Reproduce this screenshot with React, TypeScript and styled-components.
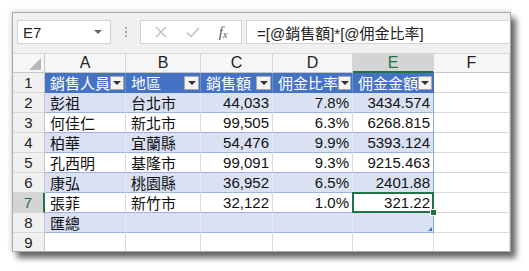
import styled, { createGlobalStyle } from "styled-components";

const GlobalStyle = createGlobalStyle`
  html, body {
    margin: 0;
    padding: 0;
    background: #ffffff;
  }
  body {
    font-family: "Liberation Sans", "Noto Sans CJK TC", sans-serif;
  }
`;

const Page = styled.div`
  padding: 12px 0 0 12px;
  width: 529px;
  height: 271px;
  box-sizing: border-box;
`;

const Window = styled.div`
  width: 499px;
  height: 240px;
  box-sizing: border-box;
  border: 1px solid #a9a9a9;
  background: #f0f0f0;
  overflow: hidden;
  box-shadow: 5px 6px 6px rgba(0, 0, 0, 0.6), -1px -1px 5px rgba(0, 0, 0, 0.15);
  display: flex;
  flex-direction: column;
`;

const FormulaBar = styled.div`
  height: 40px;
  flex-shrink: 0;
  display: flex;
  align-items: flex-start;
  padding: 7px 0 0 4px;
  box-sizing: border-box;
`;

const NameBox = styled.div`
  width: 94px;
  height: 24px;
  box-sizing: border-box;
  background: #ffffff;
  border: 1px solid #d2d2d2;
  display: flex;
  align-items: center;
  justify-content: space-between;
  padding: 0 8px 0 5px;
  font-size: 15px;
  color: #222;
`;

const DropArrow = styled.span`
  width: 0;
  height: 0;
  border-left: 4px solid transparent;
  border-right: 4px solid transparent;
  border-top: 4px solid #666;
`;

const Dots = styled.div`
  width: 29px;
  height: 24px;
  display: flex;
  flex-direction: column;
  align-items: center;
  justify-content: center;
  gap: 2px;
  span {
    width: 2px;
    height: 2px;
    background: #a8a8a8;
  }
`;

const ButtonBox = styled.div`
  width: 102px;
  height: 24px;
  box-sizing: border-box;
  background: #ffffff;
  border: 1px solid #d2d2d2;
  display: flex;
  align-items: center;
  justify-content: space-around;
  padding: 0 4px;
`;

const FxLabel = styled.span`
  font-family: "Liberation Serif", serif;
  font-style: italic;
  font-size: 15px;
  color: #555;
  sub {
    font-size: 10px;
    vertical-align: -1px;
  }
`;

const FormulaInput = styled.div`
  margin-left: 4px;
  width: 263px;
  height: 24px;
  box-sizing: border-box;
  background: #ffffff;
  border: 1px solid #d2d2d2;
  border-right: none;
  display: flex;
  align-items: center;
  padding-left: 10px;
  font-size: 15px;
  color: #222;
  white-space: nowrap;
`;

const Grid = styled.div`
  flex: 1;
  display: grid;
  grid-template-columns: 32px 81px 75px 72px 80px 81px 1fr;
  grid-auto-rows: 20px;
  background: #ffffff;
  overflow: hidden;
  font-size: 15px;
`;

const Corner = styled.div`
  background: #f6f6f6;
  border-right: 1px solid #c6c6c6;
  border-bottom: 1px solid #c6c6c6;
  border-top: 1px solid #d6d6d6;
  box-sizing: border-box;
  display: flex;
  align-items: flex-end;
  justify-content: flex-end;
  padding: 0 3px 2px 0;
`;

const CornerTriangle = styled.span`
  width: 0;
  height: 0;
  border-left: 12px solid transparent;
  border-bottom: 12px solid #b8b8b8;
`;

const ColHeader = styled.div<{ $active?: boolean }>`
  box-sizing: border-box;
  background: ${(p) => (p.$active ? "#d4d4d4" : "#f6f6f6")};
  border-top: 1px solid #d6d6d6;
  border-right: 1px solid #d6d6d6;
  border-bottom: ${(p) => (p.$active ? "2px solid #217346" : "1px solid #c6c6c6")};
  color: ${(p) => (p.$active ? "#217346" : "#222")};
  display: flex;
  align-items: center;
  justify-content: center;
  font-size: 16px;
`;

const RowHeader = styled.div<{ $active?: boolean }>`
  box-sizing: border-box;
  background: ${(p) => (p.$active ? "#d4d4d4" : "#f0f0f0")};
  border-bottom: 1px solid #d6d6d6;
  border-right: ${(p) => (p.$active ? "2px solid #217346" : "1px solid #c6c6c6")};
  color: ${(p) => (p.$active ? "#217346" : "#222")};
  display: flex;
  align-items: center;
  justify-content: center;
  font-size: 15px;
`;

const HeadCell = styled.div<{ $last?: boolean }>`
  box-sizing: border-box;
  background: #4472c4;
  color: #ffffff;
  border-right: 1px solid ${(p) => (p.$last ? "#4472c4" : "#6f91d0")};
  border-bottom: 1px solid #4472c4;
  display: flex;
  align-items: center;
  justify-content: space-between;
  padding: 0 1px 0 5px;
  white-space: nowrap;
`;

const FilterButton = styled.span`
  width: 15px;
  height: 14px;
  box-sizing: border-box;
  background: #f3f3f3;
  border: 1px solid #a8a8a8;
  display: flex;
  align-items: center;
  justify-content: center;
  &::after {
    content: "";
    border-left: 4px solid transparent;
    border-right: 4px solid transparent;
    border-top: 4px solid #333;
    margin-top: 1px;
  }
`;

const Cell = styled.div<{
  $band?: boolean;
  $table?: boolean;
  $right?: boolean;
  $last?: boolean;
  $selected?: boolean;
  $corner?: boolean;
}>`
  position: relative;
  box-sizing: border-box;
  background: ${(p) => (p.$band ? "#d9e1f2" : "#ffffff")};
  border-right: 1px solid
    ${(p) => (p.$last ? "#8ea9db" : p.$band ? "#e6ebf6" : "#dadada")};
  border-bottom: 1px solid ${(p) => (p.$table ? "#9db3de" : "#dadada")};
  color: #111;
  display: flex;
  align-items: center;
  justify-content: ${(p) => (p.$right ? "flex-end" : "flex-start")};
  padding: ${(p) => (p.$right ? "0 3px 0 0" : "0 0 0 5px")};
  white-space: nowrap;

  ${(p) =>
    p.$selected &&
    `
    &::after {
      content: "";
      position: absolute;
      left: -1px;
      top: -1px;
      right: -1px;
      bottom: -1px;
      border: 2px solid #217346;
      z-index: 2;
    }
    &::before {
      content: "";
      position: absolute;
      right: -4px;
      bottom: -4px;
      width: 5px;
      height: 5px;
      background: #217346;
      border: 1px solid #ffffff;
      z-index: 3;
    }
  `}

  ${(p) =>
    p.$corner &&
    `
    &::after {
      content: "";
      position: absolute;
      right: 1px;
      bottom: 1px;
      width: 0;
      height: 0;
      border-left: 4px solid transparent;
      border-bottom: 4px solid #4472c4;
    }
  `}
`;

const columns = ["A", "B", "C", "D", "E", "F"];
const headers = ["銷售人員", "地區", "銷售額", "佣金比率", "佣金金額"];

const rows = [
  ["彭祖", "台北市", "44,033", "7.8%", "3434.574"],
  ["何佳仁", "新北市", "99,505", "6.3%", "6268.815"],
  ["柏華", "宜蘭縣", "54,476", "9.9%", "5393.124"],
  ["孔西明", "基隆市", "99,091", "9.3%", "9215.463"],
  ["康弘", "桃園縣", "36,952", "6.5%", "2401.88"],
  ["張菲", "新竹市", "32,122", "1.0%", "321.22"],
];

function CrossIcon() {
  return (
    <svg width="12" height="12" viewBox="0 0 12 12">
      <path d="M1 1 L11 11 M11 1 L1 11" stroke="#c2c2c2" strokeWidth="1.4" fill="none" />
    </svg>
  );
}

function CheckIcon() {
  return (
    <svg width="14" height="11" viewBox="0 0 14 11">
      <path d="M1 5.5 L5 9.5 L13 1" stroke="#c2c2c2" strokeWidth="1.6" fill="none" />
    </svg>
  );
}

function App() {
  return (
    <>
      <GlobalStyle />
      <Page>
        <Window>
          <FormulaBar>
            <NameBox>
              E7
              <DropArrow />
            </NameBox>
            <Dots>
              <span />
              <span />
              <span />
            </Dots>
            <ButtonBox>
              <CrossIcon />
              <CheckIcon />
              <FxLabel>
                f<sub>x</sub>
              </FxLabel>
            </ButtonBox>
            <FormulaInput>=[@銷售額]*[@佣金比率]</FormulaInput>
          </FormulaBar>
          <Grid>
            <Corner>
              <CornerTriangle />
            </Corner>
            {columns.map((c) => (
              <ColHeader key={c} $active={c === "E"}>
                {c}
              </ColHeader>
            ))}

            <RowHeader>1</RowHeader>
            {headers.map((h, i) => (
              <HeadCell key={h} $last={i === headers.length - 1}>
                {h}
                <FilterButton />
              </HeadCell>
            ))}
            <Cell />

            {rows.map((row, r) => {
              const band = r % 2 === 0;
              return [
                <RowHeader key={`h${r}`} $active={r === 5}>
                  {r + 2}
                </RowHeader>,
                ...row.map((v, i) => (
                  <Cell
                    key={`${r}-${i}`}
                    $table
                    $band={band}
                    $right={i >= 2}
                    $last={i === 4}
                    $selected={r === 5 && i === 4}
                  >
                    {v}
                  </Cell>
                )),
                <Cell key={`f${r}`} />,
              ];
            })}

            <RowHeader>8</RowHeader>
            <Cell $table $band>
              匯總
            </Cell>
            <Cell $table $band />
            <Cell $table $band />
            <Cell $table $band />
            <Cell $table $band $last $corner />
            <Cell />

            <RowHeader>9</RowHeader>
            {columns.map((c) => (
              <Cell key={`r9${c}`} />
            ))}
          </Grid>
        </Window>
      </Page>
    </>
  );
}

export default App;
